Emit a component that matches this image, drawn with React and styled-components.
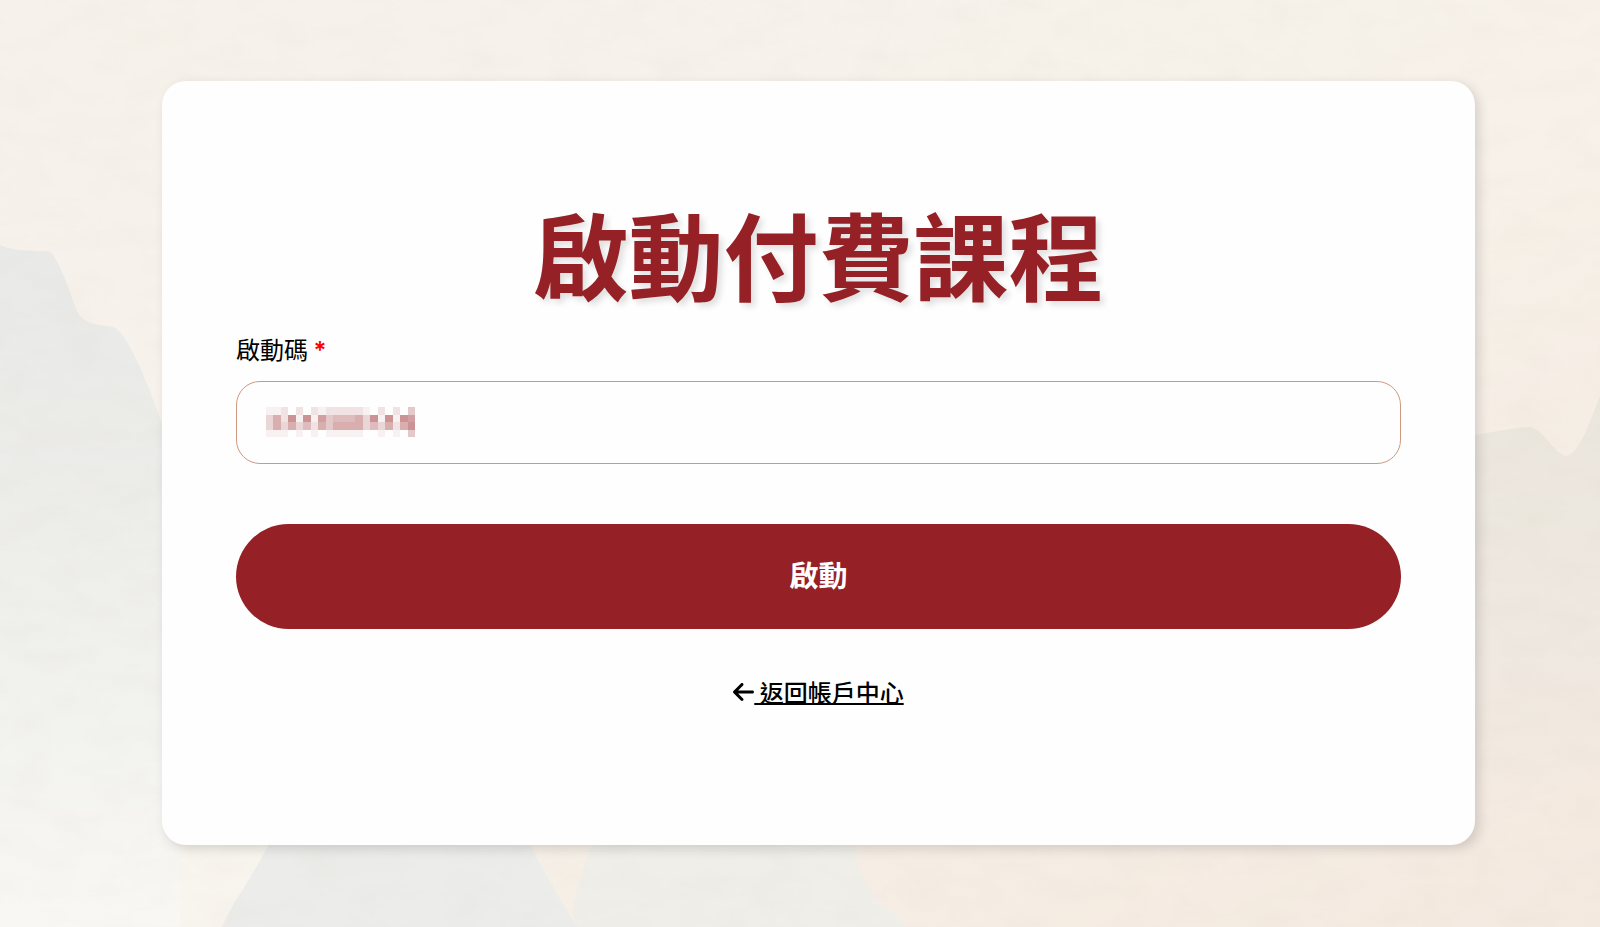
import styled, { createGlobalStyle } from "styled-components"

const GlobalStyle = createGlobalStyle`
    * {
        box-sizing: border-box;
    }
    body {
        margin: 0;
        font-family: "Noto Sans CJK TC", sans-serif;
        color: #000;
        background-color: #f7f2ea;
    }
`

const Page = styled.div`
    position: relative;
    min-height: 100vh;
    display: flex;
    padding: 81px 125px 82px 162px;
    overflow: hidden;
`

const Scenery = styled.svg`
    position: absolute;
    inset: 0;
    width: 100%;
    height: 100%;
`

const Card = styled.main`
    position: relative;
    flex: 1;
    display: flex;
    flex-direction: column;
    justify-content: center;
    padding: 0 74px 24px;
    background-color: #fefefe;
    border-radius: 24px;
    box-shadow: 4px 4px 12px rgba(0, 0, 0, 0.14);
`

const Title = styled.h1`
    margin: 0;
    font-size: 95px;
    line-height: 120px;
    font-weight: 700;
    text-align: center;
    color: #952025;
    text-shadow: 4px 4px 6px rgba(0, 0, 0, 0.12);
`

const Form = styled.form`
    display: flex;
    flex-direction: column;
`

const Label = styled.label`
    margin-top: 18px;
    font-size: 24px;
    line-height: 36px;
`

const Required = styled.span`
    font-family: Inter, sans-serif;
    font-weight: 600;
    line-height: 1;
    color: #f00;
`

const Field = styled.div`
    display: flex;
    align-items: center;
    height: 83px;
    margin-top: 14px;
    padding: 0 29px;
    border: 1px solid #cf9980;
    border-radius: 24px;
`

const MaskedCode = styled.svg`
    flex: none;
    width: 149px;
    height: 30px;
`

const Input = styled.input`
    flex: 1;
    min-width: 0;
    height: 100%;
    border: none;
    outline: none;
    background: transparent;
    font: inherit;
    font-size: 24px;
    color: #952025;
`

const Button = styled.button`
    height: 105px;
    margin-top: 60px;
    padding: 0 0 4px;
    border: none;
    border-radius: 53px;
    background-color: #952025;
    color: #fff;
    font-family: inherit;
    font-size: 29px;
    font-weight: 700;
    cursor: pointer;
`

const BackLink = styled.a`
    display: flex;
    align-items: center;
    align-self: center;
    margin-top: 45px;
    font-size: 24px;
    line-height: 36px;
    font-weight: 500;
    color: #000;
    text-decoration: none;
`

const BackText = styled.span`
    white-space: pre;
    text-decoration: underline;
    text-decoration-thickness: 2px;
    text-decoration-skip-ink: none;
`

// one string per row, each digit is how dark the cell is
const codeCells = [
    "11202021222221020204",
    "36281817455563818187",
    "36363526466663536268",
    "11101010111110010104",
]

const Background = () => (
    <Scenery viewBox="0 0 1600 927" preserveAspectRatio="none" aria-hidden="true">
        <defs>
            <linearGradient id="paper" x1="0" y1="0" x2="1" y2="1">
                <stop offset="0" stopColor="#f6f2eb" />
                <stop offset="0.55" stopColor="#f7f1e9" />
                <stop offset="1" stopColor="#f4e9df" />
            </linearGradient>
            <linearGradient id="hillLeft" x1="0" y1="0" x2="0" y2="1">
                <stop offset="0" stopColor="#e9eae8" />
                <stop offset="0.35" stopColor="#ecece9" />
                <stop offset="0.75" stopColor="#f3f3ef" />
                <stop offset="1" stopColor="#f9f7f3" />
            </linearGradient>
            <linearGradient id="hillRight" x1="0" y1="0" x2="0" y2="1">
                <stop offset="0" stopColor="#ebe6dd" />
                <stop offset="0.5" stopColor="#eee8e0" />
                <stop offset="1" stopColor="#f4eae0" />
            </linearGradient>
            <filter id="grain" x="0" y="0" width="1" height="1" colorInterpolationFilters="sRGB">
                <feTurbulence type="fractalNoise" baseFrequency="0.02 0.04" numOctaves="4" seed="4" />
                <feColorMatrix values="0 0 0 0 0.5  0 0 0 0 0.42  0 0 0 0 0.36  0 0 0 0.05 -0.02" />
            </filter>
        </defs>
        <rect width="1600" height="927" fill="url(#paper)" />
        <path
            d="M0 245C12 250 22 251 48 251C54 253 58 263 63 274C70 290 74 307 80 316C90 326 104 325 113 327C126 330 146 378 162 424L300 700V927H0Z"
            fill="url(#hillLeft)"
        />
        <path
            d="M1440 442C1475 435 1510 428 1530 427C1545 430 1552 452 1566 456C1580 454 1590 420 1600 396V780L1440 820Z"
            fill="url(#hillRight)"
        />
        <path d="M180 927V830H300V927Z" fill="#f8f4ee" />
        <path d="M222 927C234 899 252 880 276 830H526C535 862 558 893 577 927Z" fill="#ecedea" />
        <path d="M572 912C576 890 584 862 598 830H850C856 866 868 894 884 907C896 909 900 917 904 927H577Z" fill="#efeee8" />
        <rect width="1600" height="927" filter="url(#grain)" />
    </Scenery>
)

const App = () => {
  return (
    <Page>
        <GlobalStyle/>
        <Background/>
        <Card>
            <Title>啟動付費課程</Title>
            <Form onSubmit={(e) => e.preventDefault()}>
                <Label htmlFor="code">啟動碼 <Required>*</Required></Label>
                <Field>
                    <MaskedCode viewBox="0 0 20 4" preserveAspectRatio="none" shapeRendering="crispEdges" aria-hidden="true">
                        {codeCells.map((row, y) => [...row].map((level, x) => (
                            <rect key={`${x}-${y}`} x={x} y={y} width="1" height="1" fill="#952025" fillOpacity={level * 0.06} />
                        )))}
                    </MaskedCode>
                    <Input id="code" type="text" autoComplete="off" required/>
                </Field>
                <Button type="submit">啟動</Button>
            </Form>
            <BackLink href="#account">
                <svg width="21" height="24" viewBox="0 0 448 512" fill="currentColor" aria-hidden="true">
                    <path d="M9.4 233.4c-12.5 12.5-12.5 32.8 0 45.3l160 160c12.5 12.5 32.8 12.5 45.3 0s12.5-32.8 0-45.3L109.2 288 416 288c17.7 0 32-14.3 32-32s-14.3-32-32-32l-306.7 0L214.6 118.6c12.5-12.5 12.5-32.8 0-45.3s-32.8-12.5-45.3 0l-160 160z" />
                </svg>
                <BackText> 返回帳戶中心</BackText>
            </BackLink>
        </Card>
    </Page>
  )
}

export default App
